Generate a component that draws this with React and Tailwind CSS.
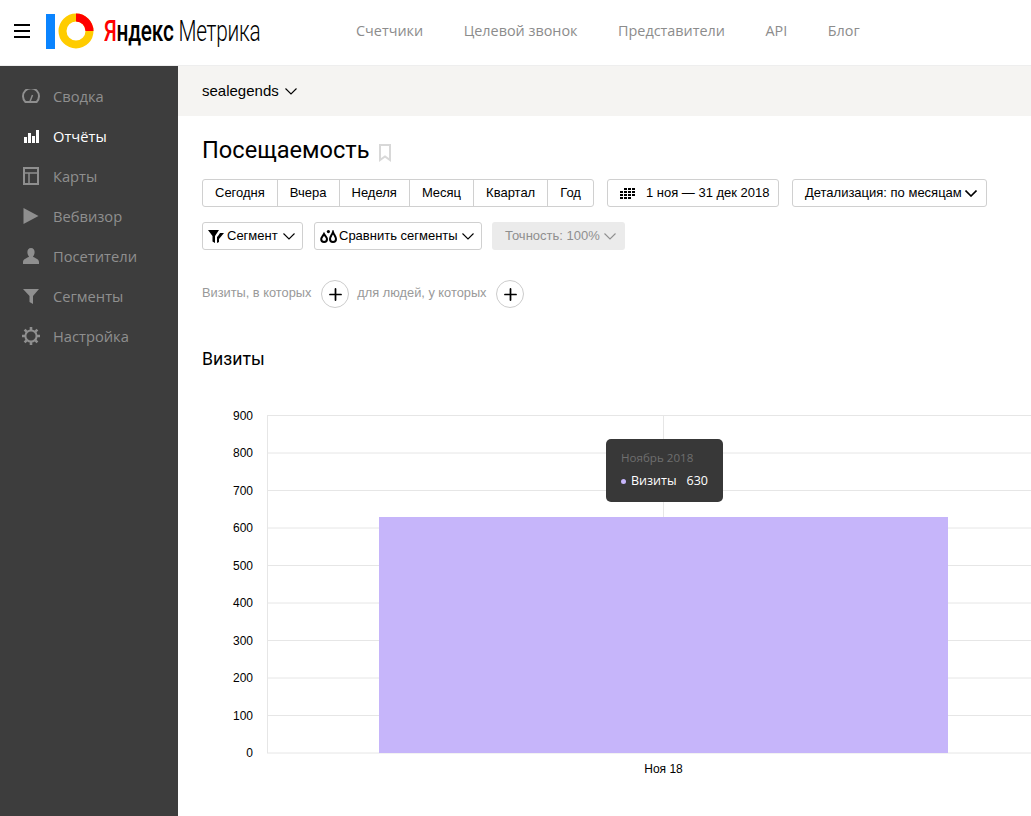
import { Plus } from "lucide-react";

const arial = "font-['Liberation_Sans',Arial,sans-serif]";

function Chevron({ className = "", strokeWidth = 1.1 }) {
  return (
    <svg width="12" height="7" viewBox="0 0 12 7" fill="none" stroke="currentColor" strokeWidth={strokeWidth} className={className}>
      <path d="M0.5 0.5 L6 6 L11.5 0.5" />
    </svg>
  );
}

function IconGauge() {
  return (
    <svg width="18" height="14" viewBox="0 0 18 14" fill="none" stroke="currentColor">
      <path d="M3.4 13 A8 8 0 1 1 14.6 13 Z" strokeWidth="2" strokeLinejoin="round" />
      <path d="M8 12.5 L10.5 6" strokeWidth="1.5" />
    </svg>
  );
}

function IconBars() {
  return (
    <svg width="15" height="13" viewBox="0 0 15 13" fill="currentColor">
      <rect x="0" y="7" width="3" height="6" />
      <rect x="4" y="3" width="3" height="10" />
      <rect x="8" y="6" width="3" height="7" />
      <rect x="12" y="0" width="3" height="13" />
    </svg>
  );
}

function IconMaps() {
  return (
    <svg width="16" height="18" viewBox="0 0 16 18" fill="none" stroke="currentColor" strokeWidth="2">
      <rect x="1" y="1" width="14" height="16" />
      <path d="M1 6 H15 M6 6 V17" strokeWidth="1.5" />
    </svg>
  );
}

function IconPlay() {
  return (
    <svg width="16" height="16" viewBox="0 0 16 16" fill="currentColor">
      <path d="M0.5 0 L15.5 8 L0.5 16 Z" />
    </svg>
  );
}

function IconUser() {
  return (
    <svg width="16" height="16" viewBox="0 0 16 16" fill="currentColor">
      <path d="M8 0 C10.4 0 11.6 1.8 11.6 4 C11.6 6 10.8 7.6 10 8.6 C10.2 9.8 16 10.6 16 14 V16 H0 V14 C0 10.6 5.8 9.8 6 8.6 C5.2 7.6 4.4 6 4.4 4 C4.4 1.8 5.6 0 8 0 Z" />
    </svg>
  );
}

function IconFunnel() {
  return (
    <svg width="16" height="15" viewBox="0 0 16 15" fill="currentColor">
      <path d="M0 0 H16 L10 7 V15 L6.5 13 V7 Z" />
    </svg>
  );
}

function IconGear() {
  return (
    <svg width="18" height="18" viewBox="0 0 18 18" fill="none" stroke="currentColor">
      <circle cx="9" cy="9" r="5.6" strokeWidth="2" />
      <path
        d="M9 0 V3 M9 15 V18 M0 9 H3 M15 9 H18 M2.6 2.6 L4.8 4.8 M13.2 13.2 L15.4 15.4 M15.4 2.6 L13.2 4.8 M4.8 13.2 L2.6 15.4"
        strokeWidth="2.6"
      />
    </svg>
  );
}

const navItems = [
  { label: "Сводка", icon: IconGauge },
  { label: "Отчёты", icon: IconBars, active: true },
  { label: "Карты", icon: IconMaps },
  { label: "Вебвизор", icon: IconPlay },
  { label: "Посетители", icon: IconUser },
  { label: "Сегменты", icon: IconFunnel },
  { label: "Настройка", icon: IconGear },
];

const periods = ["Сегодня", "Вчера", "Неделя", "Месяц", "Квартал", "Год"];
const topLinks = ["Счетчики", "Целевой звонок", "Представители", "API", "Блог"];
const ticks = [900, 800, 700, 600, 500, 400, 300, 200, 100, 0];

function Logo() {
  return (
    <div className="flex items-center">
      <div className="h-[35px] w-[9px] bg-[#0a84ff]" />
      <svg className="ml-[3px]" width="36" height="36" viewBox="0 0 36 36">
        <circle cx="18" cy="18" r="13.5" fill="none" stroke="#ffcc00" strokeWidth="8" />
        <path d="M18 4.5 A13.5 13.5 0 0 1 31.5 18" fill="none" stroke="#ff0000" strokeWidth="8" />
      </svg>
      <div className="ml-[10px] h-[34px] w-[156px] overflow-hidden whitespace-nowrap font-['Roboto',sans-serif] text-[29px] leading-[34px]">
        <div className="origin-left scale-x-[0.717] tracking-[-0.3px]">
          <span className="font-medium">
            <span className="text-[#ff0000]">Я</span>
            <span className="text-black">ндекс</span>
          </span>
          <span className="font-light text-black"> Метрика</span>
        </div>
      </div>
    </div>
  );
}

function Header() {
  return (
    <header className="flex h-[66px] shrink-0 items-center border-b border-[#eeeeee] bg-white pb-[3px]">
      <div className="ml-[14px] flex w-[16px] flex-col gap-[4px]">
        <div className="h-[2px] bg-black" />
        <div className="h-[2px] bg-black" />
        <div className="h-[2px] bg-black" />
      </div>
      <div className="ml-[16px]">
        <Logo />
      </div>
      <nav className="ml-[96px] flex gap-[40.5px] font-['Open_Sans',sans-serif] text-[14.4px] text-[#8c8c8c]">
        {topLinks.map((link) => (
          <span key={link}>{link}</span>
        ))}
      </nav>
    </header>
  );
}

function Sidebar() {
  return (
    <aside className="w-[178px] shrink-0 bg-[#3d3d3d] pt-[10px] font-['Open_Sans',sans-serif] text-[14.7px]">
      {navItems.map(({ label, icon: Icon, active }) => (
        <div
          key={label}
          className={`flex h-[40px] items-center pl-[22px] ${active ? "text-white" : "text-[#8f8f8f]"}`}
        >
          <span className="mr-[13px] flex w-[18px] justify-center">
            <Icon />
          </span>
          <span>{label}</span>
        </div>
      ))}
    </aside>
  );
}

function Button({ children, className = "" }) {
  return (
    <div
      className={`flex h-[28px] items-center rounded-[3px] border border-[#d0d0d0] bg-white text-[13px] text-black ${className}`}
    >
      {children}
    </div>
  );
}

function PlusCircle() {
  return (
    <span className="flex size-[28px] items-center justify-center rounded-full border border-[#cccccc] text-black">
      <Plus size={19} strokeWidth={2.2} />
    </span>
  );
}

function Chart() {
  return (
    <div className="relative mt-[34px] h-[380px] w-[853px]">
      <svg width="853" height="380" viewBox="0 0 853 380" className="block">
        {ticks.map((tick, i) => {
          const y = 10.5 + i * 37.5;
          return (
            <g key={tick}>
              <line x1="89" x2="853" y1={y} y2={y} stroke="#e6e6e6" />
              <text x="75" y={y + 4} textAnchor="end" fontSize="12" fill="#000" fontFamily="Liberation Sans">
                {tick}
              </text>
            </g>
          );
        })}
        <line x1="89.5" x2="89.5" y1="10" y2="348" stroke="#e6e6e6" />
        <line x1="485.5" x2="485.5" y1="10" y2="348" stroke="#e6e6e6" />
        <rect x="201" y="112" width="569" height="236" fill="#c6b5fa" />
        <text x="485.5" y="368" textAnchor="middle" fontSize="12" fill="#000" fontFamily="Liberation Sans">
          Ноя 18
        </text>
      </svg>
      <div className="absolute left-[428px] top-[34px] h-[63px] w-[117px] rounded-[5px] bg-[#383838] pl-[15px] pt-[11px] font-['Open_Sans',sans-serif] text-[12px]">
        <div className="text-[11.6px] leading-[16px] text-[#6f6f6f]">Ноябрь 2018</div>
        <div className="mt-[7px] flex items-center text-[12.5px] leading-[16px] text-white">
          <span className="mr-[5px] size-[5px] rounded-full bg-[#c6b5fa]" />
          <span>Визиты</span>
          <span className="ml-[10px]">630</span>
        </div>
      </div>
    </div>
  );
}

export default function App() {
  return (
    <div className={`flex h-[816px] w-[1031px] flex-col overflow-hidden bg-white ${arial}`}>
      <Header />
      <div className="flex min-h-0 flex-1">
        <Sidebar />
        <main className="min-w-0 flex-1">
          <div className="flex h-[50px] items-center gap-[6px] bg-[#f5f4f2] pl-[24px] text-[15px] text-black">
            sealegends
            <Chevron />
          </div>
          <div className="pl-[24px]">
            <div className="mt-[19px] flex h-[32px] items-center font-['Roboto',sans-serif] text-[23.6px] text-black">
              Посещаемость
              <svg width="12" height="18" viewBox="0 0 12 18" fill="none" stroke="#d8d8d8" strokeWidth="2" className="ml-[10px] mt-[3px]">
                <path d="M1 1 H11 V16 L6 12.5 L1 16 Z" />
              </svg>
            </div>
            <div className="mt-[12px] flex">
              <Button className="divide-x divide-[#d0d0d0]">
                {periods.map((period) => (
                  <span key={period} className="flex h-full items-center px-3">
                    {period}
                  </span>
                ))}
              </Button>
              <Button className="ml-[13px] w-[172px] pl-[12px] text-[12.8px]">
                <svg width="15" height="11" viewBox="0 0 15 11" fill="#000" className="mr-[11px]">
                  <path d="M4 0h3v2H4zM8 0h3v2H8zM12 0h3v2h-3zM0 3h3v2H0zM4 3h3v2H4zM8 3h3v2H8zM12 3h3v2h-3zM0 6h3v2H0zM4 6h3v2H4zM8 6h3v2H8zM12 6h3v2h-3zM0 9h3v2H0zM4 9h3v2H4zM8 9h3v2H8z" />
                </svg>
                1 ноя — 31 дек 2018
              </Button>
              <Button className="ml-[13px] w-[195px] pl-[12px]">
                Детализация: по месяцам
                <Chevron strokeWidth={1.6} className="ml-[3px]" />
              </Button>
            </div>
            <div className="mt-[15px] flex">
              <Button className="w-[101px] pl-[5px]">
                <svg width="16" height="13" viewBox="0 0 16 13" fill="#000" className="mr-[3px]">
                  <path d="M0 0 H11 L7 6 V13 L4.5 11.5 V6 Z M10 6 L12 3 H16 L11 9 V12 L9 13 V7 Z" />
                </svg>
                Сегмент
                <Chevron className="ml-[5px]" />
              </Button>
              <Button className="ml-[11px] w-[168px] pl-[5px]">
                <svg width="17" height="13" viewBox="0 0 17 13" fill="none" stroke="#000" strokeWidth="2" className="mr-[2px]">
                  <path d="M4 4 C3 6 1.2 7.4 1.2 9 A2.9 2.9 0 0 0 7 9 C7 7.4 5 6 4 4 Z" />
                  <path d="M13 2 C12 5 10 6.8 10 9 A3 3 0 0 0 16 9 C16 6.8 14 5 13 2 Z" />
                  <circle cx="8.4" cy="1.6" r="1.6" fill="#000" stroke="none" />
                </svg>
                Сравнить сегменты
                <Chevron className="ml-[4px]" />
              </Button>
              <div className="ml-[10px] flex h-[28px] w-[133px] items-center rounded-[3px] bg-[#ebebeb] pl-[13px] text-[13px] text-[#8f8f8f]">
                Точность: 100%
                <Chevron className="ml-[4px]" />
              </div>
            </div>
            <div className="mt-[30px] flex items-center text-[12.8px] text-[#999999]">
              <span className="-mt-[2px]">Визиты, в которых</span>
              <span className="ml-[10px]">
                <PlusCircle />
              </span>
              <span className="-mt-[2px] ml-[8px]">для людей, у которых</span>
              <span className="ml-[10px]">
                <PlusCircle />
              </span>
            </div>
            <div className="mt-[39px] h-[24px] font-['Roboto',sans-serif] text-[17.7px] leading-[24px] text-black">
              Визиты
            </div>
          </div>
          <Chart />
        </main>
      </div>
    </div>
  );
}
